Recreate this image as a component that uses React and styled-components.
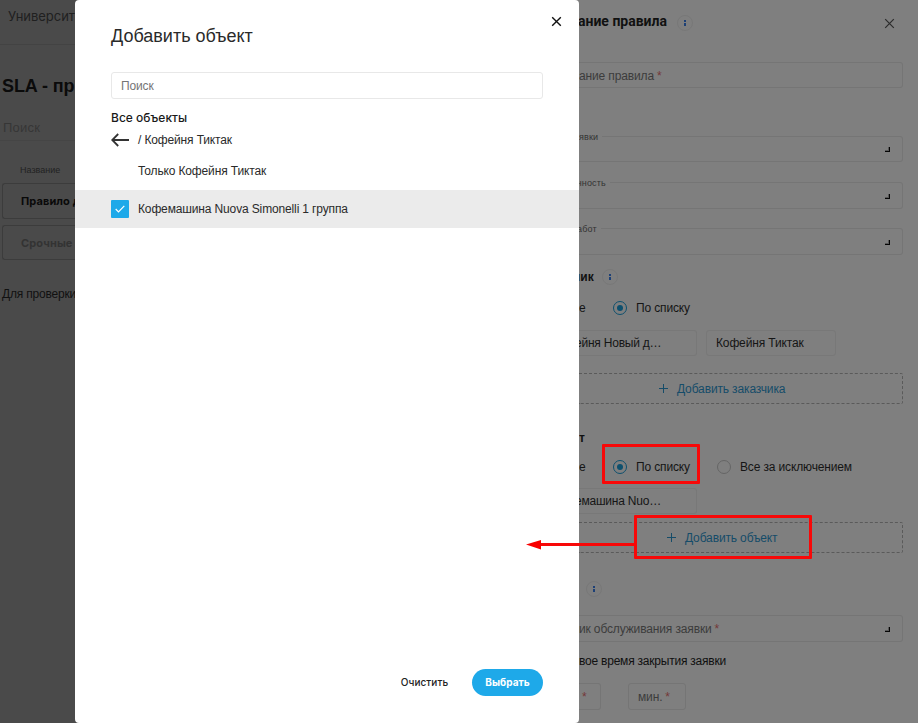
import React from 'react';
import styled, { createGlobalStyle } from 'styled-components';

const sans = '"Liberation Sans", Arial, sans-serif';
const accentFont = 'Inter, "Open Sans", sans-serif';
const dim = '#7f7f7f';
const dark = '#4a4a4a';
const line = '#757575';

const Global = createGlobalStyle`
  * { box-sizing: border-box; }
  body { margin: 0; overflow: hidden; font: 12px/16px ${sans}; letter-spacing: -0.14px; color: #151515; }
`;

const Page = styled.div`
  position: relative;
  display: grid;
  grid-template-columns: 75px 504px 1fr;
  width: 918px;
  height: 723px;
  overflow: hidden;
  background: ${dim};
`;

/* Left column */
const Sidebar = styled.aside`
  display: flex;
  flex-direction: column;
  overflow: hidden;
  white-space: nowrap;
  background: ${dark};
`;
const Company = styled.header`
  height: 45px;
  flex: none;
  padding: 8px 0 0 8px;
  border-bottom: 1px solid #434343;
  font: 13px/17px ${accentFont};
  letter-spacing: -0.02px;
  color: #202020;
`;
const PageTitle = styled.h1`
  margin: 31px 0 0 2px;
  font: bold 18px/20px ${sans};
  letter-spacing: -0.1px;
  color: #0b0b0b;
`;
const SideSearch = styled.div`
  height: 31px;
  margin-top: 14px;
  padding: 10px 0 0 3px;
  font-size: 13px;
  line-height: 15px;
  letter-spacing: 0.2px;
  border-bottom: 1px solid #454545;
  color: #363636;
`;
const ColumnHead = styled.div`
  margin: 23px 0 0 20px;
  font-size: 9px;
  line-height: 12px;
  letter-spacing: 0;
  color: #222;
`;
const RuleRow = styled.div`
  height: ${p => (p.$muted ? 35 : 36)}px;
  margin: ${p => (p.$muted ? '6px 0 0 2px' : '7px 0 0 2px')};
  padding: 9px 0 0 18px;
  border: 1px solid #3c3c3c;
  border-right: 0;
  border-radius: 3px 0 0 3px;
  font: bold 11px/16px ${accentFont};
  letter-spacing: 0.1px;
  color: ${p => (p.$muted ? '#333' : '#090909')};
`;
const Hint = styled.p`
  margin: 26px 0 0 2px;
  letter-spacing: -0.2px;
  color: #111;
`;

/* Dialog */
const DialogSlot = styled.div`
  background: linear-gradient(90deg, ${dark} 50%, ${dim} 50%);
`;
const Dialog = styled.section`
  display: flex;
  flex-direction: column;
  height: 723px;
  border-radius: 4px;
  background: #fff;
  color: #2a2a2a;
`;
const DialogHeader = styled.header`
  display: flex;
  justify-content: space-between;
  height: 72px;
  padding: 15px 16px 0 36px;
`;
const DialogTitle = styled.h2`
  margin: 10px 0 0;
  font: 18px/22px ${sans};
  letter-spacing: 0;
  color: #2a2a2a;
`;
const SearchBox = styled.div`
  height: 27px;
  margin: 0 36px;
  padding: 5px 9px;
  border: 1px solid #e8e8e8;
  border-radius: 3px;
  color: #757575;
`;
const ListTitle = styled.div`
  margin: 11px 0 0 36px;
  font: 500 12px/16px ${accentFont};
  letter-spacing: 0;
  color: #1a1a1a;
`;
const Option = styled.div`
  display: grid;
  grid-template-columns: 18px 1fr;
  column-gap: 9px;
  align-items: center;
  height: ${p => p.$h}px;
  padding-left: 36px;
  padding-bottom: ${p => p.$lift || 0}px;
  background: ${p => (p.$selected ? '#ebebeb' : 'transparent')};
`;
const Check = styled.span`
  display: flex;
  align-items: center;
  justify-content: center;
  width: 18px;
  height: 18px;
  border-radius: 1px;
  background: #1ea9e9;
`;
const DialogFooter = styled.footer`
  display: flex;
  align-items: center;
  justify-content: flex-end;
  gap: 12px;
  margin-top: auto;
  padding: 0 36px 27px 0;
`;
const Button = styled.button`
  height: 27px;
  width: 71px;
  padding: 0;
  border: 0;
  border-radius: 14px;
  background: ${p => (p.$primary ? '#1ea9e9' : 'transparent')};
  color: ${p => (p.$primary ? '#fff' : '#222')};
  font: ${p => (p.$primary ? 700 : 500)} 10px/27px ${accentFont};
  letter-spacing: 0.05px;
`;

/* Rule form */
const Form = styled.section`
  display: flex;
  flex-direction: column;
  overflow: hidden;
  padding-right: 15px;
  white-space: nowrap;
`;
const FormHeader = styled.header`
  display: flex;
  height: 62px;
`;
const FormTitle = styled.h2`
  width: 99px;
  margin: 12px 0 0 -1px;
  font: bold 14px/18px Roboto, ${sans};
  letter-spacing: 0;
  color: #111;
`;
const CloseSlot = styled.div`
  margin: 17px 7px 0 auto;
`;
const InfoBadge = styled.span`
  display: flex;
  flex-direction: column;
  align-items: center;
  justify-content: center;
  gap: 1px;
  width: 16px;
  height: 16px;
  flex: none;
  margin-top: ${p => p.$mt || 0}px;
  border: 1px solid #787878;
  border-radius: 50%;
  &::before, &::after { content: ''; width: 2px; background: #1d4076; }
  &::before { height: 2px; }
  &::after { height: 3px; }
`;
const Field = styled.div`
  display: flex;
  justify-content: space-between;
  align-items: center;
  flex: none;
  height: ${p => p.$h || 27}px;
  margin-top: ${p => p.$mt || 0}px;
  padding: 1px 12px 0 0;
  border: 1px solid ${line};
  border-left: 0;
  border-radius: 0 3px 3px 0;
  color: #3c3c3c;
`;
const Legend = styled.span`
  align-self: flex-start;
  margin: -7px 0 0 ${p => p.$shift || 0}px;
  padding-right: 4px;
  background: ${dim};
  font-size: 9px;
  line-height: 13px;
  letter-spacing: 0.15px;
  color: #333;
`;
const Caret = styled.i`
  width: 5px;
  height: 5px;
  border: solid #050505;
  border-width: 0 1px 1px 0;
  box-shadow: inset -1px -1px 0 rgba(0, 0, 0, 0.3);
`;
const Required = styled.span`
  margin-left: 3px;
  color: #743838;
`;
const SectionHead = styled.div`
  display: flex;
  height: 16px;
  flex: none;
  margin: ${p => p.$mt}px 0 0 ${p => p.$shift || 0}px;
  font: bold 12px/16px ${sans};
  letter-spacing: 0;
  color: #111;
`;
const HeadText = styled.span`
  width: ${p => p.$w}px;
`;
const Radios = styled.div`
  display: flex;
  align-items: center;
  height: 16px;
  flex: none;
  margin-top: ${p => p.$mt}px;
`;
const RadioTail = styled.span`
  width: 34px;
`;
const RadioOption = styled.label`
  display: flex;
  align-items: center;
  gap: 9px;
  margin-right: 27px;
`;
const Dot = styled.span`
  display: flex;
  align-items: center;
  justify-content: center;
  width: 14px;
  height: 14px;
  border: 1px solid ${p => (p.$on ? '#0d506e' : '#656565')};
  border-radius: 50%;
  &::after { content: ''; width: 6px; height: 6px; border-radius: 50%; background: ${p => (p.$on ? '#0d506e' : 'transparent')}; }
`;
const Chips = styled.div`
  display: flex;
  flex: none;
  gap: 9px;
  margin-top: ${p => p.$mt}px;
`;
const Chip = styled.span`
  width: ${p => (p.$cut ? 118 : 130)}px;
  height: 26px;
  padding: 4px 0 0 ${p => (p.$cut ? 0 : 9)}px;
  border: 1px solid #787878;
  border-left-width: ${p => (p.$cut ? 0 : 1)}px;
  border-radius: ${p => (p.$cut ? '0 3px 3px 0' : '3px')};
`;
const ChipText = styled.span`
  margin-left: -4px;
  letter-spacing: -0.22px;
`;
const AddBox = styled.div`
  display: flex;
  align-items: center;
  flex: none;
  gap: 9px;
  height: 31px;
  margin-top: ${p => p.$mt}px;
  padding-left: ${p => p.$indent}px;
  border: 1px dashed #5a5a5a;
  border-left: 0;
  border-radius: 0 2px 2px 0;
  color: #154c69;
`;
const Label = styled.div`
  margin-top: 11px;
  letter-spacing: -0.22px;
  color: #101010;
`;
const TimeRow = styled.div`
  display: flex;
  gap: 27px;
  margin-top: 14px;
`;
const TimeBox = styled.div`
  width: ${p => p.$w}px;
  height: 27px;
  padding: 5px 0 0 ${p => p.$pl}px;
  border: 1px solid #757575;
  border-left-width: ${p => (p.$cut ? 0 : 1)}px;
  border-radius: ${p => (p.$cut ? '0 3px 3px 0' : '3px')};
  color: #3c3c3c;
`;

/* Annotations drawn over the page */
const Highlight = styled.div`
  position: absolute;
  left: ${p => p.$x}px;
  top: ${p => p.$y}px;
  width: ${p => p.$w}px;
  height: ${p => p.$h}px;
  border: 3px solid #f80808;
  border-radius: 1px;
`;
const Arrow = styled.svg`
  position: absolute;
  left: 526px;
  top: 539px;
`;

const Cross = ({ color, width = 1.4 }) => (
  <svg width="13" height="13" viewBox="0 0 13 13" fill="none" stroke={color} strokeWidth={width}>
    <path d="M2.2 2.2 10.8 10.8M10.8 2.2 2.2 10.8" />
  </svg>
);
const Plus = () => (
  <svg width="9" height="9" viewBox="0 0 9 9" fill="none" stroke="currentColor">
    <path d="M4.5 0v9M0 4.5h9" />
  </svg>
);
const Back = () => (
  <svg width="19" height="14" viewBox="0 0 19 14" fill="none" stroke="#333" strokeWidth="1.8">
    <path d="M1.2 7H18M7.2 1 1.2 7l6 6" />
  </svg>
);

export default function App() {
  return (
    <Page>
      <Global />
      <Sidebar>
        <Company>Университ</Company>
        <PageTitle>SLA - пр</PageTitle>
        <SideSearch>Поиск</SideSearch>
        <ColumnHead>Название</ColumnHead>
        <RuleRow>Правило д</RuleRow>
        <RuleRow $muted>Срочные</RuleRow>
        <Hint>Для проверки</Hint>
      </Sidebar>

      <DialogSlot>
        <Dialog>
          <DialogHeader>
            <DialogTitle>Добавить объект</DialogTitle>
            <Cross color="#111" />
          </DialogHeader>
          <SearchBox>Поиск</SearchBox>
          <ListTitle>Все объекты</ListTitle>
          <Option $h={28}><Back /><span>/ Кофейня Тиктак</span></Option>
          <Option $h={36} $lift={2}><span /><span>Только Кофейня Тиктак</span></Option>
          <Option $h={38} $selected>
            <Check>
              <svg width="10" height="8" viewBox="0 0 10 8" fill="none" stroke="#fff" strokeWidth="1.2">
                <path d="M.7 4 3.5 6.8 9.3.9" />
              </svg>
            </Check>
            <span>Кофемашина Nuova Simonelli 1 группа</span>
          </Option>
          <DialogFooter>
            <Button>Очистить</Button>
            <Button $primary>Выбрать</Button>
          </DialogFooter>
        </Dialog>
      </DialogSlot>

      <Form>
        <FormHeader>
          <FormTitle>ание правила</FormTitle>
          <InfoBadge $mt={15} />
          <CloseSlot><Cross color="#2c2c2c" width={1.2} /></CloseSlot>
        </FormHeader>
        <Field $h={26}><span>ание правила<Required>*</Required></span></Field>
        <Field $mt={48} $h={26}><Legend>явки</Legend><Caret /></Field>
        <Field $mt={20}><Legend $shift={-2}>чность</Legend><Caret /></Field>
        <Field $mt={19}><Legend $shift={-2}>абот</Legend><Caret /></Field>

        <SectionHead $mt={14} $shift={-6}><HeadText $w={29}>ник</HeadText><InfoBadge /></SectionHead>
        <Radios $mt={15}>
          <RadioTail>е</RadioTail>
          <RadioOption><Dot $on />По списку</RadioOption>
        </Radios>
        <Chips $mt={14}>
          <Chip $cut><ChipText>ейня Новый д…</ChipText></Chip>
          <Chip>Кофейня Тиктак</Chip>
        </Chips>
        <AddBox $mt={17} $indent={80}><Plus />Добавить заказчика</AddBox>

        <SectionHead $mt={26}>т</SectionHead>
        <Radios $mt={13}>
          <RadioTail>е</RadioTail>
          <RadioOption><Dot $on />По списку</RadioOption>
          <RadioOption><Dot />Все за исключением</RadioOption>
        </Radios>
        <Chips $mt={13}><Chip $cut><ChipText>емашина Nuo…</ChipText></Chip></Chips>
        <AddBox $mt={8} $indent={88}><Plus />Добавить объект</AddBox>

        <SectionHead $mt={28}><HeadText $w={7} /><InfoBadge /></SectionHead>
        <Field $mt={18}><span>ик обслуживания заявки<Required>*</Required></span><Caret /></Field>
        <Label>вое время закрытия заявки</Label>
        <TimeRow>
          <TimeBox $w={22} $pl={0} $cut><Required>*</Required></TimeBox>
          <TimeBox $w={58} $pl={9}>мин.<Required>*</Required></TimeBox>
        </TimeRow>
      </Form>

      <Highlight $x={602} $y={444} $w={98} $h={40} />
      <Highlight $x={634} $y={515} $w={178} $h={44} />
      <Arrow width="110" height="12" viewBox="0 0 110 12">
        <path d="M14 5.5h95" stroke="#f80808" strokeWidth="3" />
        <path d="M0 5.5 15 1v9.5z" fill="#f80000" />
      </Arrow>
    </Page>
  );
}
